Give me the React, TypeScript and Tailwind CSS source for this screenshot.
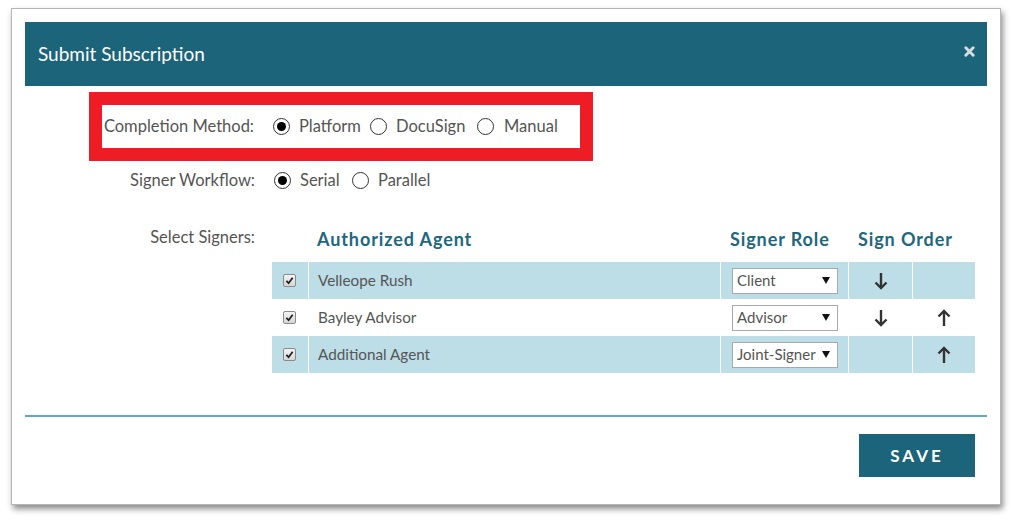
import React from "react"

const font = { fontFamily: "Lato, 'Open Sans', sans-serif" }

function Radio({ checked }: { checked?: boolean }) {
    return (
        <span className="w-[17px] h-[17px] rounded-full border-[1.5px] border-[#333] flex items-center justify-center shrink-0">
            {checked && <span className="w-[9px] h-[9px] rounded-full bg-black" />}
        </span>
    )
}

function Check() {
    return (
        <span className="w-[13px] h-[13px] rounded-[2px] border border-[#8a8a8a] bg-gradient-to-b from-[#f4f4f4] to-[#d6d6d6] flex items-center justify-center">
            <svg width="9" height="9" viewBox="0 0 10 10">
                <path d="M1.5 5.5 L4 8 L8.5 2" fill="none" stroke="#222" strokeWidth="2" />
            </svg>
        </span>
    )
}

function RoleSelect({ value }: { value: string }) {
    return (
        <div className="ml-[11px] w-[106px] h-[26px] bg-white border border-[#a9a9a9] flex items-center justify-between pl-[4px] pr-[7px] text-[15px] text-[#555]">
            <span>{value}</span>
            <svg width="8" height="7" viewBox="0 0 8 7">
                <path d="M0 0 H8 L4 7 Z" fill="#111" />
            </svg>
        </div>
    )
}

function Arrow({ up }: { up?: boolean }) {
    return (
        <svg width="14" height="18" viewBox="0 0 14 18" className={up ? "rotate-180" : ""}>
            <path d="M7 1 V15.5" stroke="#333" strokeWidth="2.4" />
            <path d="M1.5 10.5 L7 16 L12.5 10.5" fill="none" stroke="#333" strokeWidth="2.4" />
        </svg>
    )
}

export default function App() {
    const signers = [
        { name: "Velleope Rush", role: "Client", down: true, up: false, shaded: true },
        { name: "Bayley Advisor", role: "Advisor", down: true, up: true, shaded: false },
        { name: "Additional Agent", role: "Joint-Signer", down: false, up: true, shaded: true },
    ]

    return (
        <div className="w-[1013px] h-[520px] bg-white pt-[8px] pl-[11px]" style={font}>
            <div className="w-[990px] h-[497px] bg-white border border-[#b5b5b5] shadow-[2px_4px_6px_rgba(0,0,0,0.45)] flex flex-col">
                {/* header */}
                <div className="mt-[13px] ml-[13px] w-[962px] h-[64px] bg-[#1c6479] flex items-center justify-between pl-[13px] pr-[12px]">
                    <span className="text-white text-[19px]">Submit Subscription</span>
                    <svg width="11" height="11" viewBox="0 0 12 12" className="mb-[5px]">
                        <path d="M2 2 L10 10 M10 2 L2 10" stroke="#d5dde0" strokeWidth="3.2" strokeLinecap="round" />
                    </svg>
                </div>

                {/* completion method, highlighted */}
                <div className="mt-[6px] ml-[77px] w-[504px] h-[69px] border-[13px] border-[#ee1d25] flex items-center text-[16.5px] text-[#555]">
                    <span className="w-[152px] text-right">Completion Method:</span>
                    <div className="ml-[19px] flex items-center">
                        <Radio checked />
                        <span className="ml-[9px] w-[71px]">Platform</span>
                        <Radio />
                        <span className="ml-[9px] w-[81px]">DocuSign</span>
                        <Radio />
                        <span className="ml-[10px]">Manual</span>
                    </div>
                </div>

                {/* signer workflow */}
                <div className="mt-[7px] h-[24px] flex items-center text-[16.5px] text-[#555]">
                    <span className="w-[243px] text-right">Signer Workflow:</span>
                    <div className="ml-[19px] flex items-center">
                        <Radio checked />
                        <span className="ml-[9px] w-[52px]">Serial</span>
                        <Radio />
                        <span className="ml-[9px]">Parallel</span>
                    </div>
                </div>

                {/* signers table */}
                <div className="mt-[30px] flex">
                    <span className="w-[243px] text-right text-[16.5px] text-[#555] pt-[3px]">Select Signers:</span>
                    <div className="ml-[17px] w-[703px]">
                        <div className="grid grid-cols-[36px_412px_128px_127px] h-[34px] items-center text-[18px] tracking-[0.05em] font-bold text-[#21677d] mb-[6px]">
                            <span />
                            <span className="pl-[9px]">Authorized Agent</span>
                            <span className="pl-[10px]">Signer Role</span>
                            <span className="pl-[10px]">Sign Order</span>
                        </div>
                        {signers.map((s) => (
                            <div
                                key={s.name}
                                className={`grid grid-cols-[36px_412px_128px_64px_63px] h-[37px] text-[15.25px] text-[#555] ${s.shaded ? "bg-[#bddde7]" : "bg-white"}`}
                            >
                                <div className="flex items-center justify-center pr-[2px]"><Check /></div>
                                <div className="flex items-center pl-[9px] border-l border-white">{s.name}</div>
                                <div className="flex items-center border-l border-white"><RoleSelect value={s.role} /></div>
                                <div className="flex items-center justify-center border-l border-white">{s.down && <Arrow />}</div>
                                <div className="flex items-center justify-center border-l border-white">{s.up && <Arrow up />}</div>
                            </div>
                        ))}
                    </div>
                </div>

                {/* footer */}
                <div className="mt-[42px] ml-[13px] w-[962px] h-[2px] bg-[#5fa9bf]" />
                <div className="mt-[17px] flex justify-end pr-[25px]">
                    <button className="w-[116px] h-[43px] bg-[#1c6479] text-white font-bold text-[17px] tracking-[0.18em]">SAVE</button>
                </div>
            </div>
        </div>
    )
}
